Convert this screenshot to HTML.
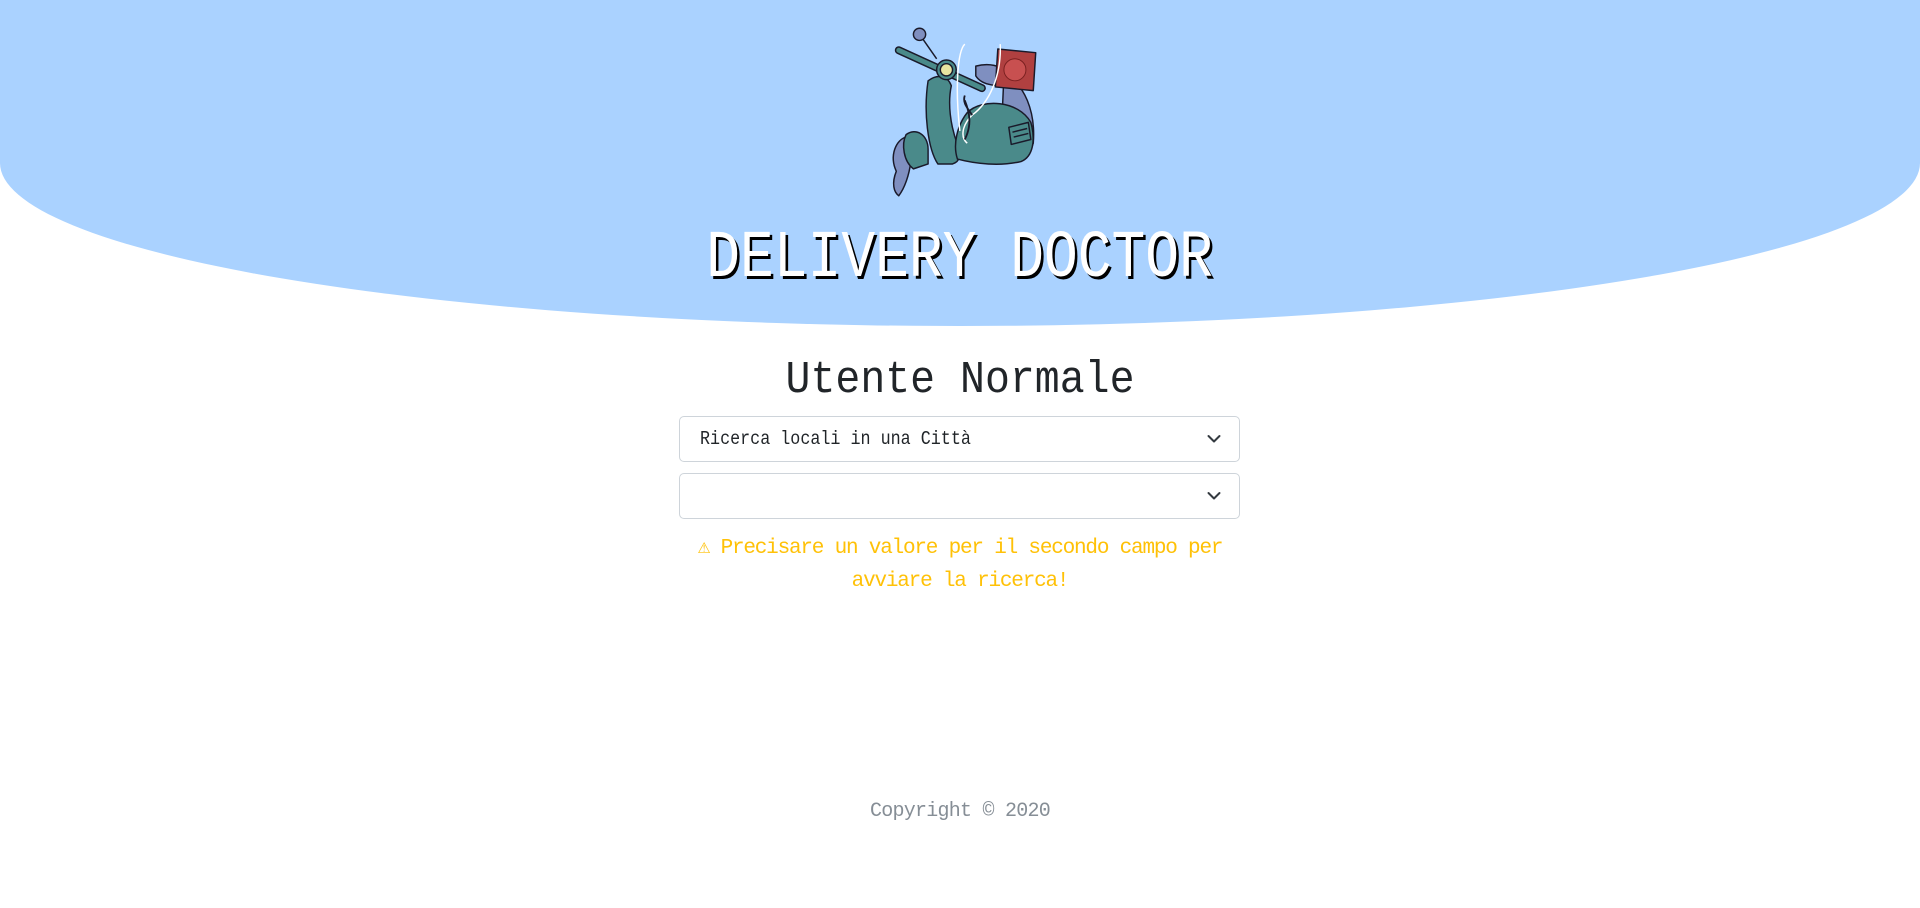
<!DOCTYPE html>
<html><head><meta charset="utf-8">
<style>
html,body{margin:0;padding:0;width:1920px;height:908px;overflow:hidden;background:#fff;font-family:"Liberation Mono","DejaVu Sans Mono",monospace;}
.hdr{position:absolute;left:0;top:0;width:1920px;height:326px;background:#aad2ff;border-radius:0 0 50% 50%;}
.c{position:absolute;left:0;width:1920px;text-align:center;}
.c span{display:inline-block;transform-origin:center;}
.title{top:222px;font-size:67px;color:#fff;text-shadow:3px 3px 0 #000;line-height:74px;}
.title span{transform:scaleX(0.84);}
.h2{top:355px;font-size:45px;color:#212529;line-height:52px;}
.h2 span{transform:scaleX(0.923);}
.sel{position:absolute;left:679px;width:559px;height:44px;border:1px solid #ced4da;border-radius:5px;}
.sel span{position:absolute;left:20px;top:11px;font-size:19px;color:#212529;line-height:22px;transform:scaleX(0.88);transform-origin:left;white-space:nowrap;}
.sel svg{position:absolute;right:18px;top:17px;}
.warn{top:532px;font-size:21px;letter-spacing:-1.2px;color:#ffc107;line-height:33px;}
.copy{top:799px;font-size:20px;letter-spacing:-0.75px;color:#868e96;line-height:26px;}
</style></head><body>
<div class="hdr"></div>
<svg style="position:absolute;left:884px;top:27px" width="153" height="170" viewBox="0 0 125 139">
 <g stroke="#1a1a2a" stroke-width="1.2" stroke-linejoin="round">
  <path d="M98 40 C115 45 124 70 122 95 C118 108 105 112 95 106 Z" fill="#7f8fc0"/>
  <path d="M75 32 C90 28 105 35 104 45 C95 50 80 48 75 40 Z" fill="#7f8fc0"/>
  <path d="M10 118 C4 105 10 92 18 90 C26 95 22 125 12 138 C8 135 6 128 10 118 Z" fill="#7f8fc0"/>
  <path d="M29 6 L43 26" fill="none"/>
  <circle cx="29" cy="6" r="5" fill="#7f8fc0"/>
  <path d="M12 19 L80 50" stroke="#1a1a2a" stroke-width="6.5" stroke-linecap="round"/>
  <path d="M12 19 L80 50" stroke="#4a8a8a" stroke-width="4" stroke-linecap="round"/>
  <path d="M36 44 C44 38 52 40 55 48 C52 62 54 80 60 96 C64 104 62 110 56 112 L44 112 C36 100 32 70 36 44 Z" fill="#4a8a8a"/>
  <path d="M68 70 C80 58 110 60 120 78 C124 92 122 106 112 110 C95 114 75 112 60 108 C56 96 60 80 68 70 Z" fill="#4a8a8a"/>
  <path d="M18 88 C26 82 36 88 36 100 L36 112 L24 116 C16 110 14 96 18 88 Z" fill="#4a8a8a"/>
  <circle cx="51" cy="35" r="8" fill="#4a8a8a"/>
  <circle cx="51" cy="35" r="5" fill="#e8e4a0"/>
  <path d="M93 18 L124 21 L122 52 L91 49 Z" fill="#b04040"/>
  <circle cx="107" cy="35" r="9" fill="#c85050" stroke="#7a2020" stroke-width="0.8"/>
  <path d="M102 82 L118 78 L120 92 L104 96 Z" fill="#4a8a8a"/>
  <path d="M105 86 L117 83 M106 90 L118 87" fill="none"/>
 </g>
 <path d="M62 85 C58 50 60 20 66 14 M95 14 C96 40 86 62 72 72 C64 80 62 90 68 95" fill="none" stroke="#fff" stroke-width="1.2"/>
 <path d="M66 60 C70 70 72 80 66 92 M72 72 C68 66 64 62 66 56" fill="none" stroke="#1a1a2a" stroke-width="1.5"/>
</svg>
<div class="c title"><span>DELIVERY DOCTOR</span></div>
<div class="c h2"><span>Utente Normale</span></div>
<div class="sel" style="top:416px"><span>Ricerca locali in una Città</span>
<svg width="14" height="10" viewBox="0 0 14 10"><path d="M1.5 2 L7 7.5 L12.5 2" fill="none" stroke="#343a40" stroke-width="2" stroke-linecap="round" stroke-linejoin="round"/></svg></div>
<div class="sel" style="top:473px">
<svg width="14" height="10" viewBox="0 0 14 10"><path d="M1.5 2 L7 7.5 L12.5 2" fill="none" stroke="#343a40" stroke-width="2" stroke-linecap="round" stroke-linejoin="round"/></svg></div>
<div class="c warn">⚠ Precisare un valore per il secondo campo per<br>avviare la ricerca!</div>
<div class="c copy">Copyright © 2020</div>
</body></html>
